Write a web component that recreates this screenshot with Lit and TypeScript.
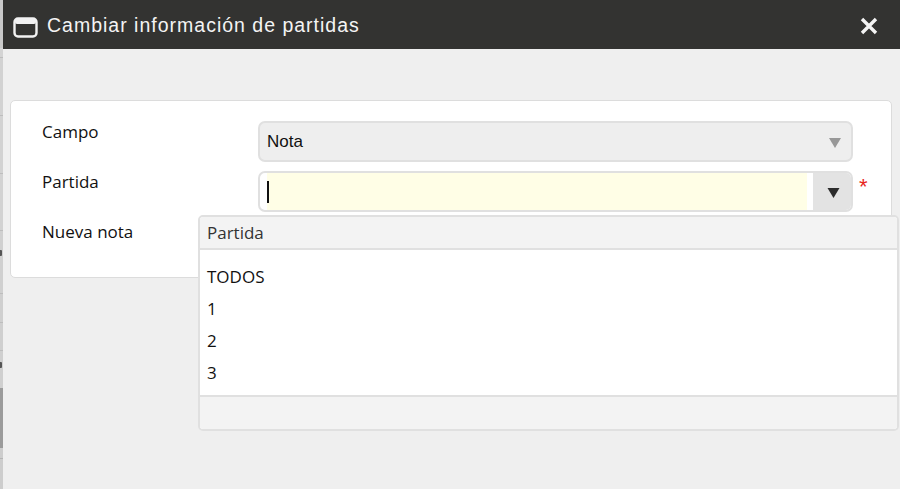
import { LitElement, html, css } from "lit";
import { customElement } from "lit/decorators.js";

const STRIP: [number, string][] = [
  [48, "#c9c9c9"],
  [9, "#d4d4d4"],
  [1, "#bdbdbd"],
  [57, "#d2d2d2"],
  [1, "#bdbdbd"],
  [57, "#d2d2d2"],
  [1, "#bdbdbd"],
  [56, "#d2d2d2"],
  [1, "#bdbdbd"],
  [62, "#d0d0d0"],
  [1, "#bdbdbd"],
  [28, "#cfcfcf"],
  [1, "#bdbdbd"],
  [27, "#cfcfcf"],
  [1, "#bdbdbd"],
  [37, "#cfcfcf"],
  [60, "#9b9b9b"],
  [10, "#cdcdcd"],
  [1, "#b5b5b5"],
  [30, "#cdcdcd"],
];

@customElement("app-root")
export class AppRoot extends LitElement {
  static styles = css`
    :host {
      display: flex;
      width: 900px;
      height: 489px;
      overflow: hidden;
      position: relative;
      background: #efefef;
      font-family: "Open Sans", "Noto Sans", sans-serif;
      color: #111;
    }
    .strip {
      width: 3px;
      flex: none;
      display: flex;
      flex-direction: column;
      position: relative;
      overflow: hidden;
    }
    .frag {
      position: absolute;
      left: 0;
      width: 2px;
      height: 6px;
      background: #555;
      border-radius: 0 1px 1px 0;
    }
    .dialog {
      flex: 1;
      display: flex;
      flex-direction: column;
      min-width: 0;
    }
    .titlebar {
      height: 49px;
      flex: none;
      background: #333331;
      display: flex;
      align-items: center;
      padding: 0 21px 0 10px;
      color: #f4f4f4;
      box-sizing: border-box;
    }
    .title {
      font-family: "Liberation Sans", Arial, sans-serif;
      font-size: 19.5px;
      letter-spacing: 1px;
      margin-left: 9px;
      flex: 1;
      position: relative;
      top: 1px;
    }
    .winicon {
      width: 25px;
      height: 21px;
      margin-top: 5px;
      flex: none;
    }
    .close {
      width: 20px;
      height: 20px;
      flex: none;
      margin-top: 3px;
    }
    .body {
      flex: 1;
      padding: 51px 8px 0 7px;
    }
    .card {
      background: #fff;
      border: 1px solid #dcdcdc;
      border-radius: 5px;
      height: 178px;
      box-sizing: border-box;
      padding: 20px 38px 0 31px;
      display: grid;
      grid-template-columns: 216px 1fr;
      grid-template-rows: 41px 41px 40px;
      row-gap: 9px;
      font-size: 17px;
    }
    .label {
      line-height: 22px;
    }
    .field {
      display: flex;
      height: 41px;
      box-sizing: border-box;
      border: 2px solid #e0e0e0;
      border-radius: 7px;
      overflow: hidden;
      position: relative;
    }
    .row {
      position: relative;
    }
    .readonly {
      background: #eeeeee;
      align-items: center;
      padding-left: 7px;
      line-height: 1;
      font-family: "Liberation Sans", Arial, sans-serif;
      font-size: 17px;
    }
    .readonly .txt {
      flex: 1;
    }
    .readonly svg {
      width: 14px;
      height: 12px;
      margin-right: 9px;
      margin-top: 2px;
      opacity: 0.9;
    }
    .input {
      flex: 1;
      background: #fffee6;
      margin-left: 7px;
      display: flex;
      align-items: center;
      padding-left: 0;
    }
    .caret {
      width: 2px;
      height: 22px;
      background: #111;
    }
    .gap {
      width: 6px;
      background: #fff;
    }
    .btn {
      width: 38px;
      background: #e3e3e3;
      display: flex;
      align-items: center;
      justify-content: center;
    }
    .btn svg {
      width: 13px;
      height: 12px;
      margin-top: 3px;
      margin-left: 3px;
    }
    .req {
      position: absolute;
      left: 601px;
      top: 5px;
      color: #e8261f;
      font-family: "Liberation Sans", Arial, sans-serif;
      font-size: 22px;
      line-height: 22px;
    }
    .dropdown {
      position: absolute;
      left: 198px;
      top: 215px;
      width: 701px;
      height: 216px;
      box-sizing: border-box;
      background: #fff;
      border: 2px solid #e0e0e0;
      border-radius: 5px;
      display: flex;
      flex-direction: column;
      font-size: 17px;
      overflow: hidden;
    }
    .dd-head {
      height: 31px;
      flex: none;
      background: #f3f3f3;
      border-bottom: 2px solid #e0e0e0;
      display: flex;
      align-items: center;
      padding-left: 7px;
      color: #333;
    }
    .dd-list {
      flex: 1;
      padding: 11px 7px 0;
    }
    .dd-item {
      height: 32px;
      line-height: 32px;
      color: #111;
    }
    .dd-foot {
      height: 32px;
      flex: none;
      background: #f3f3f3;
      border-top: 2px solid #e0e0e0;
    }
  `;

  render() {
    return html`
      <div class="strip">
        ${STRIP.map(
          ([h, c]) => html`<div style="height:${h}px;background:${c}"></div>`
        )}
        <span class="frag" style="top:250px"></span>
        <span class="frag" style="top:362px"></span>
      </div>
      <div class="dialog">
        <div class="titlebar">
          <svg class="winicon" viewBox="0 0 25 21">
            <rect x="1.5" y="1.5" width="22" height="18" rx="3.5" fill="#333331" stroke="#f2f2f2" stroke-width="2.4"></rect>
            <rect x="2" y="2" width="21" height="5" rx="2" fill="#f2f2f2"></rect>
          </svg>
          <div class="title">Cambiar información de partidas</div>
          <svg class="close" viewBox="0 0 20 20">
            <path d="M3 3 L17 17 M17 3 L3 17" stroke="#f4f4f4" stroke-width="3.4" fill="none"></path>
          </svg>
        </div>
        <div class="body">
          <div class="card">
            <div class="label">Campo</div>
            <div class="field readonly">
              <span class="txt">Nota</span>
              <svg viewBox="0 0 14 12"><path d="M1 1 H13 L7 11 Z" fill="#8f8f8f"></path></svg>
            </div>
            <div class="label">Partida</div>
            <div class="row">
              <div class="field">
                <div class="input"><div class="caret"></div></div>
                <div class="gap"></div>
                <div class="btn">
                  <svg viewBox="0 0 13 12"><path d="M0.5 1 H12.5 L6.5 11 Z" fill="#2c2c2c"></path></svg>
                </div>
              </div>
              <span class="req">*</span>
            </div>
            <div class="label">Nueva nota</div>
            <div></div>
          </div>
        </div>
      </div>
      <div class="dropdown">
        <div class="dd-head">Partida</div>
        <div class="dd-list">
          ${["TODOS", "1", "2", "3"].map(
            (t) => html`<div class="dd-item">${t}</div>`
          )}
        </div>
        <div class="dd-foot"></div>
      </div>
    `;
  }
}
